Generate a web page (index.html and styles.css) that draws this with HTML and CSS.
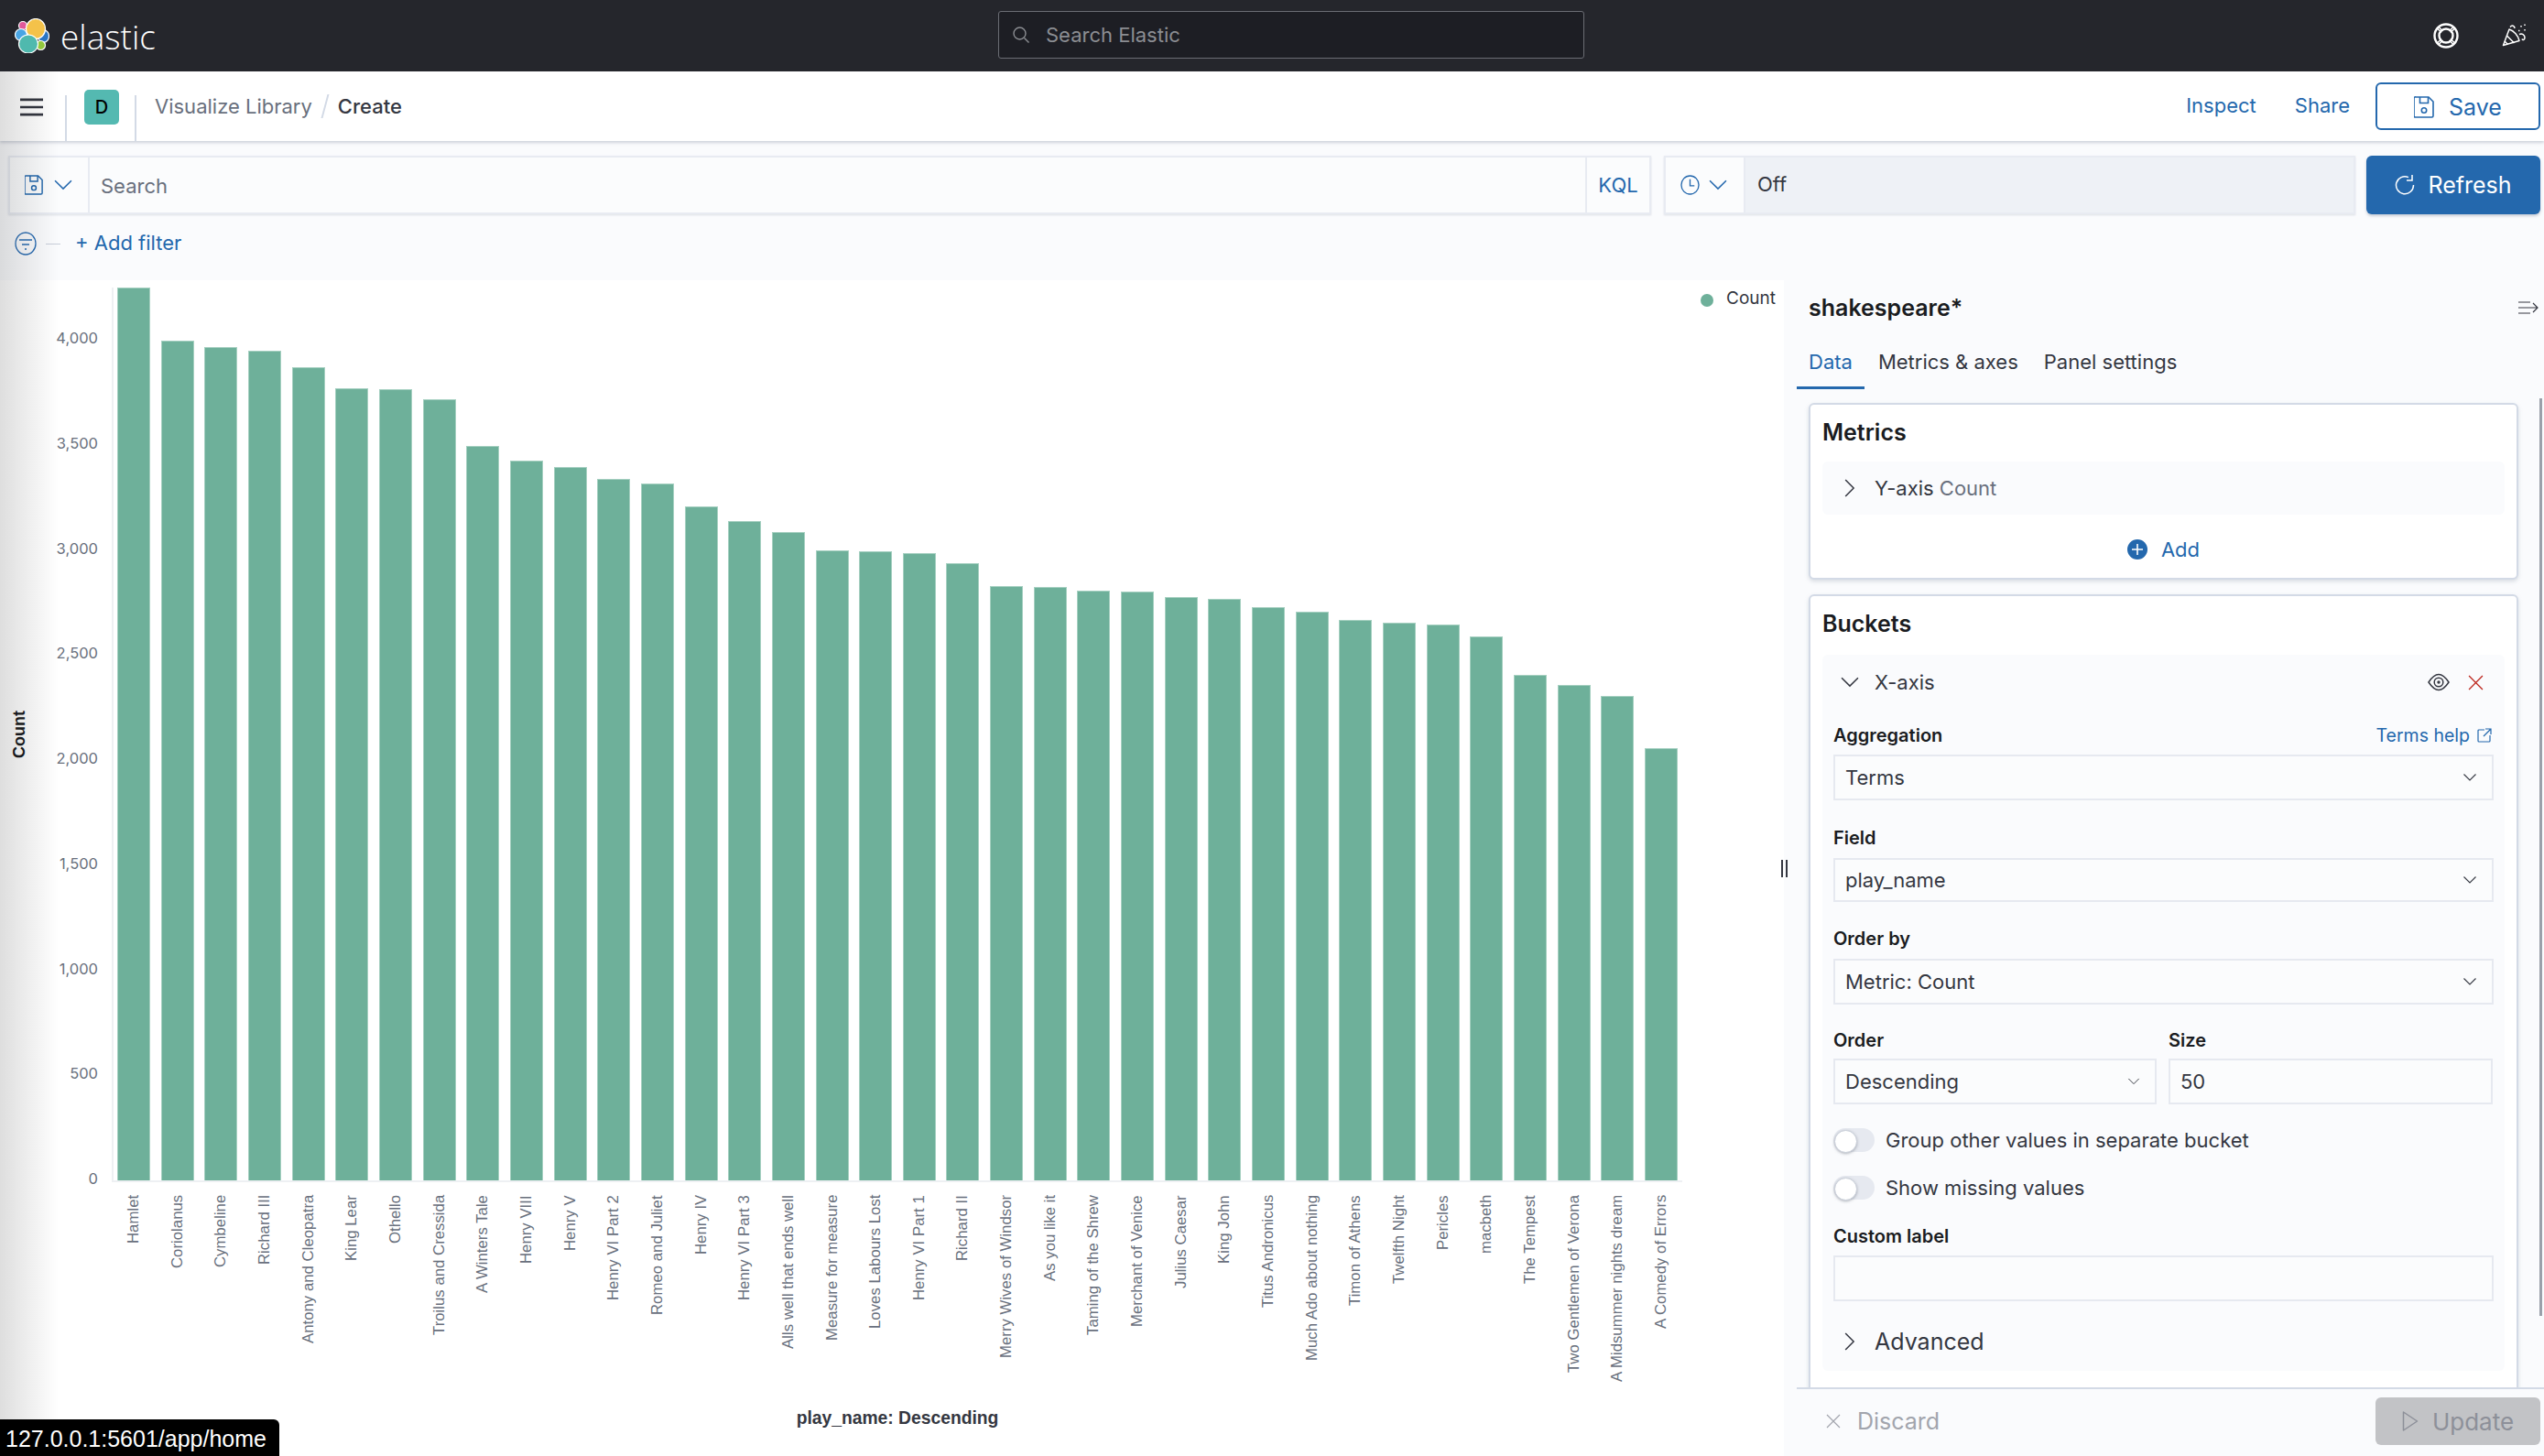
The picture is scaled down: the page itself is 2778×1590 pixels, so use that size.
FILE: index.html
```html
<!DOCTYPE html>
<html lang="en">
<head>
  <meta charset="UTF-8">
  <title>Create - Visualize Library - Elastic</title>
  <link rel="stylesheet" href="styles.css">
</head>
<body>
  <svg class="defs" width="0" height="0">
    <symbol id="chev-down" viewBox="0 0 16 16"><path d="M1.500 4.500 8 11l6.500-6.500" fill="none" stroke="currentColor" stroke-width="1.100"/></symbol>
    <symbol id="chev-right" viewBox="0 0 16 16"><path d="M4.500 1.500 11 8l-6.500 6.500" fill="none" stroke="currentColor" stroke-width="1.100"/></symbol>
    <symbol id="disk" viewBox="0 0 22 24"><path d="M2 1h14l5 5v15.500a1.500 1.500 0 0 1-1.500 1.500h-18a1.500 1.500 0 0 1-1.500-1.500V2.500A1.500 1.500 0 0 1 2 1Z" fill="none" stroke="currentColor" stroke-width="1.600"/><path d="M6.500 1v6.500h9V1" fill="none" stroke="currentColor" stroke-width="1.600"/><circle cx="11" cy="15.500" r="2.700" fill="none" stroke="currentColor" stroke-width="1.600"/></symbol>
  </svg>

  <header class="topbar">
    <div class="brand">
      <svg class="brand-logo" viewBox="0 0 38 38" width="38" height="38">
        <g stroke="#fff" stroke-width="1.200">
          <ellipse cx="9" cy="8" rx="4.500" ry="4.500" fill="#e0589a"/>
          <ellipse cx="7" cy="18" rx="6.500" ry="6.500" fill="#49a5e4"/>
          <ellipse cx="31.500" cy="19.500" rx="6" ry="6.800" fill="#2b75c4"/>
          <ellipse cx="28.500" cy="29.500" rx="5" ry="5" fill="#93c83e"/>
          <ellipse cx="23" cy="11.500" rx="10.500" ry="11" fill="#f4c24a"/>
          <ellipse cx="15" cy="28" rx="10.500" ry="10" fill="#4fb9ae"/>
        </g>
      </svg>
      <span class="brand-name">elastic</span>
    </div>
    <div class="global-search">
      <svg viewBox="0 0 20 20" width="20" height="20"><circle cx="8.500" cy="8.500" r="6.500" fill="none" stroke="currentColor" stroke-width="1.400"/><path d="m13.500 13.500 5 5" stroke="currentColor" stroke-width="1.400"/></svg>
      <span>Search Elastic</span>
    </div>
    <div class="top-icons">
      <svg viewBox="0 0 28 28" width="28" height="28"><g fill="none" stroke="#fff" stroke-width="2.400"><circle cx="14" cy="14" r="12.500"/><circle cx="14" cy="14" r="7.500"/><path d="m6 4.500 4.500 4.500M4.500 6 9 10.500M22 4.500 17.500 9M23.500 6 19 10.500M4.500 22 9 17.500M6 23.500l4.500-4.500M23.500 22 19 17.500M22 23.500 17.500 19" stroke-width="1.500"/></g></svg>
      <svg viewBox="0 0 28 26" width="28" height="26"><g fill="none" stroke="#fff" stroke-width="1.500" stroke-linejoin="round"><path d="M1.500 23.500 8 6c5 1.500 10 7 11 12.500Z"/><path d="m5.500 13 8 8M3 19l3.500 3.500"/><path d="M9 3.500c2-2.500 5-1.500 5 1.500M19 11.500c3-1.500 6 .5 6 3.500s-2.500 3-3 1.500"/><path d="M18 7.500h1.500M21 2v1.500M25 .5V2M25 6v1.500" /></g></svg>
    </div>
  </header>

  <div class="appbar">
    <button class="menu-btn" type="button">
      <svg viewBox="0 0 26 20" width="26" height="20"><path d="M0 1.500h26M0 10h26M0 18.500h26" stroke="#343741" stroke-width="2.800"/></svg>
    </button>
    <div class="space-cell"><span class="avatar">D</span></div>
    <nav class="crumbs">
      <a>Visualize Library</a>
      <i class="crumb-sep"></i>
      <b>Create</b>
    </nav>
    <div class="app-actions">
      <a class="link">Inspect</a>
      <a class="link">Share</a>
      <button class="btn-save" type="button">
        <svg width="22" height="24"><use href="#disk"/></svg>
        Save
      </button>
    </div>
  </div>

  <div class="querybar">
    <div class="qgroup qgroup-search">
      <div class="qprepend">
        <svg width="20" height="24"><use href="#disk"/></svg>
        <svg width="22" height="22"><use href="#chev-down"/></svg>
      </div>
      <div class="qinput">Search</div>
      <div class="qkql">KQL</div>
    </div>
    <div class="qgroup qgroup-time">
      <div class="qprepend qprepend-time">
        <svg viewBox="0 0 22 24" width="21" height="24"><g fill="none" stroke="currentColor" stroke-width="1.400"><ellipse cx="11" cy="12" rx="10" ry="10.500"/><path d="M11 5.500V13h5"/></g></svg>
        <svg width="22" height="22"><use href="#chev-down"/></svg>
      </div>
      <div class="qvalue">Off</div>
    </div>
    <button class="btn-refresh" type="button">
      <svg viewBox="0 0 22 22" width="22" height="22"><path d="M15 2.600A9.500 9.500 0 1 0 20.500 11" fill="none" stroke="#fff" stroke-width="1.500"/><path d="M19 0v6h-6" fill="none" stroke="#fff" stroke-width="1.500"/></svg>
      Refresh
    </button>
  </div>

  <div class="filterbar">
    <svg viewBox="0 0 24 26" width="24" height="26"><g fill="none" stroke="#2a6db3" stroke-width="1.300"><ellipse cx="12" cy="13" rx="11" ry="12"/><path d="M5 9h14M8 14h8M11 19h2"/></g></svg>
    <i class="filter-dash"></i>
    <a class="add-filter">+ Add filter</a>
  </div>

  <main class="workspace">
    <section class="chart">
      <div class="chart-main">
        <div class="y-title"><span>Count</span></div>
        <div class="y-axis">
          <span>4,000</span><span>3,500</span><span>3,000</span><span>2,500</span><span>2,000</span><span>1,500</span><span>1,000</span><span>500</span><span>0</span>
        </div>
        <div class="plot-wrap">
          <div class="plot">
            <div class="bar" style="height:975px"></div>
            <div class="bar" style="height:917px"></div>
            <div class="bar" style="height:910px"></div>
            <div class="bar" style="height:906px"></div>
            <div class="bar" style="height:888px"></div>
            <div class="bar" style="height:865px"></div>
            <div class="bar" style="height:864px"></div>
            <div class="bar" style="height:853px"></div>
            <div class="bar" style="height:802px"></div>
            <div class="bar" style="height:786px"></div>
            <div class="bar" style="height:779px"></div>
            <div class="bar" style="height:766px"></div>
            <div class="bar" style="height:761px"></div>
            <div class="bar" style="height:736px"></div>
            <div class="bar" style="height:720px"></div>
            <div class="bar" style="height:708px"></div>
            <div class="bar" style="height:688px"></div>
            <div class="bar" style="height:687px"></div>
            <div class="bar" style="height:685px"></div>
            <div class="bar" style="height:674px"></div>
            <div class="bar" style="height:649px"></div>
            <div class="bar" style="height:648px"></div>
            <div class="bar" style="height:644px"></div>
            <div class="bar" style="height:643px"></div>
            <div class="bar" style="height:637px"></div>
            <div class="bar" style="height:635px"></div>
            <div class="bar" style="height:626px"></div>
            <div class="bar" style="height:621px"></div>
            <div class="bar" style="height:612px"></div>
            <div class="bar" style="height:609px"></div>
            <div class="bar" style="height:607px"></div>
            <div class="bar" style="height:594px"></div>
            <div class="bar" style="height:552px"></div>
            <div class="bar" style="height:541px"></div>
            <div class="bar" style="height:529px"></div>
            <div class="bar" style="height:472px"></div>
          </div>
          <div class="x-ticks">
            <span>Hamlet</span><span>Coriolanus</span><span>Cymbeline</span><span>Richard III</span>
            <span>Antony and Cleopatra</span><span>King Lear</span><span>Othello</span><span>Troilus and Cressida</span>
            <span>A Winters Tale</span><span>Henry VIII</span><span>Henry V</span><span>Henry VI Part 2</span>
            <span>Romeo and Juliet</span><span>Henry IV</span><span>Henry VI Part 3</span><span>Alls well that ends well</span>
            <span>Measure for measure</span><span>Loves Labours Lost</span><span>Henry VI Part 1</span><span>Richard II</span>
            <span>Merry Wives of Windsor</span><span>As you like it</span><span>Taming of the Shrew</span><span>Merchant of Venice</span>
            <span>Julius Caesar</span><span>King John</span><span>Titus Andronicus</span><span>Much Ado about nothing</span>
            <span>Timon of Athens</span><span>Twelfth Night</span><span>Pericles</span><span>macbeth</span>
            <span>The Tempest</span><span>Two Gentlemen of Verona</span><span>A Midsummer nights dream</span><span>A Comedy of Errors</span>
          </div>
          <div class="x-title">play_name: Descending</div>
        </div>
        <div class="legend"><i class="legend-dot"></i>Count</div>
      </div>
    </section>

    <aside class="panel">
      <div class="panel-head">
        <h2>shakespeare*</h2>
        <svg viewBox="0 0 22 14" width="22" height="14"><g fill="none" stroke="#343741" stroke-width="1.200"><path d="M0 1h13M0 7h21M0 13h13M16 2l5 5-5 5"/></g></svg>
      </div>
      <div class="tabs">
        <a class="tab tab-on">Data</a>
        <a class="tab">Metrics &amp; axes</a>
        <a class="tab">Panel settings</a>
      </div>

      <div class="panel-body">
        <div class="card">
          <h3>Metrics</h3>
          <div class="row-collapsed">
            <svg width="22" height="22"><use href="#chev-right"/></svg>
            <span>Y-axis <em>Count</em></span>
          </div>
          <a class="add-row">
            <svg viewBox="0 0 22 22" width="22" height="22"><circle cx="11" cy="11" r="11" fill="#2468ad"/><path d="M11 5v12M5 11h12" stroke="#fff" stroke-width="1.600"/></svg>
            Add
          </a>
        </div>

        <div class="card card-buckets">
          <h3>Buckets</h3>
          <div class="bucket">
            <div class="bucket-head">
              <svg width="22" height="22"><use href="#chev-down"/></svg>
              <span>X-axis</span>
              <div class="bucket-tools">
                <svg viewBox="0 0 24 22" width="24" height="22"><g fill="none" stroke="#343741" stroke-width="1.500"><path d="M1 11c4-6 7-8.500 11-8.500S19 5 23 11c-4 6-7 8.500-11 8.500S5 17 1 11Z"/><circle cx="12" cy="11" r="4.800"/></g><circle cx="12" cy="11" r="1.700" fill="#343741"/></svg>
                <svg viewBox="0 0 16 16" width="17" height="17"><path d="m1 1 14 14M15 1 1 15" stroke="#bd271e" stroke-width="1.200"/></svg>
              </div>
            </div>

            <div class="field">
              <div class="field-label field-label-first">
                <label>Aggregation</label>
                <a class="help">Terms help
                  <svg viewBox="0 0 16 16" width="16" height="16"><g fill="none" stroke="#2468ad" stroke-width="1.200"><path d="M8 2H2a1 1 0 0 0-1 1v11a1 1 0 0 0 1 1h11a1 1 0 0 0 1-1V8"/><path d="M9 1h6v6M15 1 7 9"/></g></svg>
                </a>
              </div>
              <div class="select"><span>Terms</span><svg width="16" height="16"><use href="#chev-down"/></svg></div>
            </div>

            <div class="field field-next">
              <div class="field-label"><label>Field</label></div>
              <div class="select select-short"><span>play_name</span><svg width="16" height="16"><use href="#chev-down"/></svg></div>
            </div>

            <div class="field field-orderby">
              <div class="field-label"><label>Order by</label></div>
              <div class="select"><span>Metric: Count</span><svg width="16" height="16"><use href="#chev-down"/></svg></div>
            </div>

            <div class="field-pair">
              <div class="field field-order">
                <div class="field-label"><label>Order</label></div>
                <div class="select"><span>Descending</span><svg width="14" height="14"><use href="#chev-down"/></svg></div>
              </div>
              <div class="field field-size">
                <div class="field-label"><label>Size</label></div>
                <div class="select"><span>50</span></div>
              </div>
            </div>

            <div class="switch-row switch-first"><i class="switch"></i>Group other values in separate bucket</div>
            <div class="switch-row"><i class="switch"></i>Show missing values</div>

            <div class="field field-custom">
              <div class="field-label"><label>Custom label</label></div>
              <div class="select"></div>
            </div>

            <div class="advanced">
              <svg width="22" height="22"><use href="#chev-right"/></svg>
              <span>Advanced</span>
            </div>
          </div>
        </div>
        <i class="scroll-thumb"></i>
      </div>

      <div class="panel-foot">
        <a class="discard">
          <svg viewBox="0 0 16 16" width="16" height="16"><path d="m1 1 14 14M15 1 1 15" stroke="#a2a5ad" stroke-width="1.200"/></svg>
          Discard
        </a>
        <button class="btn-update" type="button">
          <svg viewBox="0 0 18 24" width="18" height="24"><path d="M1.500 2v20l15-10Z" fill="none" stroke="#8d9099" stroke-width="1.500" stroke-linejoin="round"/></svg>
          Update
        </button>
      </div>
    </aside>
  </main>

  <div class="resize-grip"></div>
  <div class="edge-shade"></div>
  <div class="status-bubble">127.0.0.1:5601/app/home</div>
</body>
</html>
```

FILE: styles.css
```css
* {
  box-sizing: border-box;
  margin: 0;
  padding: 0;
}

html,
body {
  height: 100%;
}

body {
  font-family: Inter, "Liberation Sans", sans-serif;
  font-size: 22px;
  color: #343741;
  background: #fafbfd;
  overflow: hidden;
  position: relative;
}

.defs {
  position: absolute;
}

button {
  font-family: inherit;
  border: none;
}

/* top dark bar */
.topbar {
  height: 78px;
  background: #25262c;
  display: flex;
  align-items: center;
  position: relative;
  padding: 0 18px 0 16px;
}

.brand {
  display: flex;
  align-items: center;
  gap: 12px;
  width: 1074px;
}

.brand-name {
  color: #fff;
  font-family: "Open Sans", sans-serif;
  font-weight: 300;
  font-size: 37px;
  line-height: 1;
}

.global-search {
  width: 640px;
  height: 52px;
  margin-top: -2px;
  background: #1d1e24;
  border: 1px solid #6b6d74;
  border-radius: 3px;
  display: flex;
  align-items: center;
  gap: 16px;
  padding-left: 14px;
  color: #8b8d92;
}

.global-search span {
  margin-left: 1px;
}

.top-icons {
  margin-left: auto;
  display: flex;
  align-items: center;
  gap: 47px;
}

/* breadcrumbs bar */
.appbar {
  height: 76px;
  background: #fff;
  display: flex;
  box-shadow: 0 2px 3px rgba(152, 162, 179, 0.45);
  position: relative;
}

.menu-btn {
  width: 73px;
  background: none;
  border-right: 2px solid #d3dae6;
  padding: 3px 24px 0 22px;
  margin-top: 26px;
  display: flex;
  align-items: flex-start;
}

.space-cell {
  width: 76px;
  margin-top: 26px;
  border-right: 2px solid #d3dae6;
  padding-left: 19px;
}

.avatar {
  display: flex;
  align-items: center;
  justify-content: center;
  width: 38px;
  height: 38px;
  margin-top: -6px;
  background: #54b9b1;
  border-radius: 5px;
  color: #000;
  font-size: 20px;
  font-weight: 500;
}

.crumbs {
  display: flex;
  align-items: center;
  margin-left: 20px;
  color: #69707d;
}

.crumbs b {
  color: #343741;
  font-weight: 500;
}

.crumb-sep {
  width: 2px;
  height: 26px;
  margin: 0 13px;
  background: #d3dae6;
  transform: skewX(-15deg);
}

.app-actions {
  margin-left: auto;
  display: flex;
  align-items: center;
  padding-right: 4px;
}

.link {
  color: #2468ad;
  margin-right: 42px;
  padding-bottom: 2px;
}

.app-actions .link:nth-child(2) {
  margin-right: 28px;
}

.btn-save {
  width: 180px;
  height: 52px;
  background: #fff;
  border: 2px solid #2468ad;
  border-radius: 6px;
  color: #2468ad;
  font-size: 25px;
  padding-top: 1px;
  display: flex;
  align-items: center;
  justify-content: center;
  gap: 16px;
}

/* query row */
.querybar {
  display: flex;
  height: 64px;
  margin: 16px 4px 0 9px;
}

.qgroup {
  display: flex;
  background: #fbfcfd;
  border: 2px solid #e8ebf2;
  box-shadow: 0 1px 2px rgba(152, 162, 179, 0.3);
}

.qgroup-search {
  width: 1794px;
}

.qgroup-time {
  width: 755px;
  margin-left: 14px;
}

.qprepend {
  width: 87px;
  display: flex;
  align-items: center;
  gap: 11px;
  padding-left: 16px;
  border-right: 2px solid #e8ebf2;
  color: #2468ad;
}

.qprepend-time {
  gap: 9px;
}

.qinput {
  flex: 1;
  display: flex;
  align-items: center;
  padding: 2px 0 0 12px;
  color: #69707d;
}

.qkql {
  width: 70px;
  display: flex;
  align-items: center;
  justify-content: center;
  border-left: 2px solid #e8ebf2;
  color: #2468ad;
}

.qvalue {
  flex: 1;
  display: flex;
  align-items: center;
  padding: 0 0 2px 13px;
  background: #eef1f6;
  color: #343741;
}

.btn-refresh {
  margin-left: 12px;
  width: 190px;
  background: #2468ad;
  border-radius: 6px;
  color: #fff;
  font-size: 25px;
  display: flex;
  align-items: center;
  justify-content: center;
  gap: 14px;
  box-shadow: 0 2px 3px rgba(152, 162, 179, 0.5);
}

/* filter row */
.filterbar {
  height: 72px;
  display: flex;
  align-items: center;
  padding: 0 0 8px 16px;
}

.filter-dash {
  width: 16px;
  height: 1px;
  margin: 0 16px 0 10px;
  background: #c8ced9;
}

.add-filter {
  color: #2468ad;
  padding-bottom: 2px;
}

/* chart + side panel */
.workspace {
  display: flex;
  height: 1284px;
}

.chart {
  width: 1948px;
  background: #fff;
  position: relative;
}

.chart-main {
  display: flex;
  height: 100%;
  padding-top: 8px;
}

.y-title {
  width: 40px;
  display: flex;
  align-items: center;
  justify-content: center;
  height: 975px;
  padding-left: 2px;
}

.y-title span {
  writing-mode: vertical-rl;
  transform: rotate(180deg);
  font-family: "Liberation Sans", sans-serif;
  font-weight: 700;
  font-size: 18px;
  color: #1a1c21;
}

.y-axis {
  width: 67px;
  height: 938px;
  margin-top: 45px;
  display: flex;
  flex-direction: column;
  justify-content: space-between;
  align-items: flex-end;
  font-size: 16.500px;
  line-height: 20px;
  color: #69707d;
}

.plot-wrap {
  margin-left: 15px;
  width: 1715px;
}

.plot {
  height: 975px;
  display: flex;
  align-items: flex-end;
  gap: 11.660px;
  padding-left: 4px;
  border-left: 2px solid #eef0f3;
  border-bottom: 2px solid #eef0f3;
  box-sizing: content-box;
  width: 1709px;
}

.bar {
  width: 36px;
  flex: none;
  background: #6eb09a;
  border: 1px solid #a6d0c1;
  border-bottom: none;
}

.x-ticks {
  display: flex;
  padding-top: 14px;
  height: 235px;
}

.x-ticks span {
  display: block;
  width: 47.660px;
  height: 216px;
  flex: none;
  writing-mode: vertical-rl;
  transform: rotate(180deg);
  text-align: right;
  line-height: 47.660px;
  font-family: "Liberation Sans", sans-serif;
  font-size: 16.800px;
  color: #69707d;
  white-space: nowrap;
}

.x-title {
  margin-top: 12px;
  text-align: center;
  width: 1716px;
  font-family: "Liberation Sans", sans-serif;
  font-weight: 700;
  font-size: 19.300px;
  color: #343741;
}

.legend {
  margin: 0 0 0 20px;
  display: flex;
  align-items: flex-start;
  gap: 14px;
  font-size: 19px;
  line-height: 24px;
  color: #343741;
  white-space: nowrap;
}

.legend-dot {
  width: 14px;
  height: 14px;
  margin-top: 7px;
  border-radius: 50%;
  background: #6eb09a;
}

.panel {
  width: 830px;
  display: flex;
  flex-direction: column;
  background: #fafbfd;
}

.panel-head {
  display: flex;
  justify-content: space-between;
  align-items: center;
  height: 60px;
  padding: 0 6px 0 27px;
}

.panel-head h2 {
  font-size: 25px;
  font-weight: 600;
  color: #1a1c21;
}

.tabs {
  display: flex;
  height: 60px;
  margin-left: 14px;
  gap: 2px;
}

.tab {
  padding: 0 13px;
  height: 59px;
  line-height: 58px;
}

.tab-on {
  color: #2468ad;
  border-bottom: 3px solid #2468ad;
}

.panel-body {
  flex: 1;
  overflow: hidden;
  position: relative;
  padding: 14px 28px 0 27px;
}

.scroll-thumb {
  position: absolute;
  right: 2px;
  top: 9px;
  width: 3px;
  height: 1002px;
  background: #9aa0aa;
}

.card {
  background: #fff;
  border: 2px solid #d3dae6;
  border-radius: 6px;
  box-shadow: 0 2px 4px rgba(152, 162, 179, 0.35);
  padding: 0 13px;
}

.card h3 {
  font-size: 25px;
  font-weight: 600;
  color: #1a1c21;
  line-height: 30px;
  padding-top: 15px;
  padding-bottom: 1px;
}

.row-collapsed {
  margin-top: 16px;
  height: 58px;
  background: #fafbfd;
  border-radius: 6px;
  display: flex;
  align-items: center;
  padding-left: 19px;
  gap: 16px;
}

.row-collapsed em {
  font-style: normal;
  color: #69707d;
}

.add-row {
  display: flex;
  align-items: center;
  justify-content: center;
  gap: 15px;
  height: 69px;
  padding-top: 6px;
  color: #2468ad;
}

.card-buckets {
  margin-top: 16px;
  height: 1000px;
}

.bucket {
  margin-top: 18px;
  background: #fafbfd;
  border-radius: 6px;
  padding: 0 12px;
  height: 782px;
}

.bucket-head {
  height: 60px;
  display: flex;
  align-items: center;
  gap: 16px;
  padding-left: 7px;
}

.bucket-tools {
  margin-left: auto;
  display: flex;
  align-items: center;
  gap: 20px;
  padding-right: 11px;
}

.field-label {
  display: flex;
  justify-content: space-between;
  align-items: center;
  height: 24px;
  margin-bottom: 10px;
}

.field-label-first {
  margin-bottom: 9px;
}

.field-label label {
  font-size: 20px;
  font-weight: 600;
  color: #1a1c21;
}

.help {
  display: flex;
  align-items: center;
  gap: 8px;
  font-size: 19.500px;
  color: #2468ad;
  margin-right: 2px;
}

.field {
  margin-top: 16px;
}

.field-next {
  margin-top: 29px;
}

.field-orderby {
  margin-top: 28px;
}

.select {
  height: 50px;
  background: #fbfcfd;
  border: 2px solid #e6e9f0;
  display: flex;
  align-items: center;
  justify-content: space-between;
  padding: 0 16px 0 11px;
}

.select-short {
  height: 48px;
}

.field-pair {
  display: flex;
  gap: 13px;
  margin-top: 27px;
}

.field-pair .field {
  margin-top: 0;
}

.field-pair .field-label {
  margin-bottom: 8px;
}

.field-order {
  width: 353px;
}

.field-size {
  width: 354px;
}

.switch-row {
  display: flex;
  align-items: center;
  gap: 12px;
  height: 26px;
}

.switch-first {
  margin-top: 26px;
  margin-bottom: 26px;
}

.switch {
  width: 45px;
  height: 26px;
  border-radius: 13px;
  background: #e6e9f0;
  position: relative;
}

.switch::after {
  content: "";
  position: absolute;
  left: 1px;
  top: 2px;
  width: 23px;
  height: 23px;
  border-radius: 50%;
  background: #fff;
  border: 1px solid #c9cfd9;
  box-shadow: 0 1px 3px rgba(105, 112, 125, 0.5);
}

.field-custom {
  margin-top: 28px;
}

.field-custom .field-label {
  margin-bottom: 9px;
}

.advanced {
  display: flex;
  align-items: center;
  gap: 16px;
  margin-top: 29px;
  padding-left: 7px;
  font-size: 25px;
}

.panel-foot {
  height: 75px;
  margin-left: 14px;
  border-top: 2px solid #d3dae6;
  background: #fafbfd;
  display: flex;
  align-items: center;
  justify-content: space-between;
  padding: 0 4px 3px 32px;
  font-size: 25px;
  color: #a2a5ad;
}

.discard {
  display: flex;
  align-items: center;
  gap: 18px;
}

.btn-update {
  width: 180px;
  height: 52px;
  background: #c2c3c6;
  border-radius: 6px;
  color: #8d9099;
  font-size: 26px;
  display: flex;
  align-items: center;
  justify-content: center;
  gap: 15px;
}

/* overlays */
.resize-grip {
  position: absolute;
  left: 1945px;
  top: 939px;
  width: 7px;
  height: 19px;
  border-left: 2px solid #343741;
  border-right: 2px solid #343741;
}

.edge-shade {
  position: absolute;
  left: 0;
  top: 78px;
  bottom: 0;
  width: 64px;
  background: linear-gradient(to right, rgba(0, 0, 0, 0.13), rgba(0, 0, 0, 0));
  pointer-events: none;
}

.status-bubble {
  position: absolute;
  left: 0;
  bottom: 0;
  height: 40px;
  width: 305px;
  background: #000;
  color: #fff;
  border-top-right-radius: 6px;
  font-family: "Liberation Sans", sans-serif;
  font-size: 25px;
  line-height: 42px;
  padding-left: 6px;
  white-space: nowrap;
}
```
